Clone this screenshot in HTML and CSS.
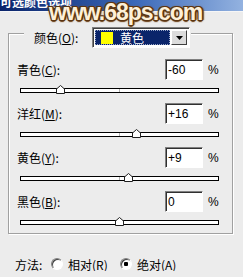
FILE: index.html
```html
<!DOCTYPE html>
<html lang="zh">
<head>
    <meta charset="UTF-8">
    <title>可选颜色选项</title>
    <link rel="stylesheet" href="styles.css">
</head>
<body>
    <div id="titlebar"><span>可选颜色选项</span></div>
    <div id="watermark">www.68ps.com</div>

    <div id="dialog">
        <div class="group">
            <div class="legend">
                <span class="lbl">颜色(<u>O</u>):</span>
                <div class="select">
                    <div class="picked"><i class="swatch"></i>黄色</div>
                    <div class="drop">
                        <svg width="7" height="4" viewBox="0 0 7 4"><polygon points="0,0 7,0 3.5,4" fill="#000"/></svg>
                    </div>
                </div>
            </div>

            <div class="field">
                <div class="head">
                    <span class="name">青色(<u>C</u>):</span>
                    <div class="box">-60</div>
                    <span class="pct">%</span>
                </div>
                <div class="track"><i class="mid"></i><svg class="thumb" style="left: 40px" width="9" height="9"><polygon points="0.5,8.5 0.5,4 4.5,0.5 8.5,4 8.5,8.5" fill="#fff" stroke="#202020"/></svg></div>
            </div>

            <div class="field">
                <div class="head">
                    <span class="name">洋红(<u>M</u>):</span>
                    <div class="box">+16</div>
                    <span class="pct">%</span>
                </div>
                <div class="track"><i class="mid"></i><svg class="thumb" style="left: 116px" width="9" height="9"><polygon points="0.5,8.5 0.5,4 4.5,0.5 8.5,4 8.5,8.5" fill="#fff" stroke="#202020"/></svg></div>
            </div>

            <div class="field">
                <div class="head">
                    <span class="name">黄色(<u>Y</u>):</span>
                    <div class="box">+9</div>
                    <span class="pct">%</span>
                </div>
                <div class="track"><i class="mid"></i><svg class="thumb" style="left: 108px" width="9" height="9"><polygon points="0.5,8.5 0.5,4 4.5,0.5 8.5,4 8.5,8.5" fill="#fff" stroke="#202020"/></svg></div>
            </div>

            <div class="field">
                <div class="head">
                    <span class="name">黑色(<u>B</u>):</span>
                    <div class="box">0</div>
                    <span class="pct">%</span>
                </div>
                <div class="track"><i class="mid"></i><svg class="thumb" style="left: 99px" width="9" height="9"><polygon points="0.5,8.5 0.5,4 4.5,0.5 8.5,4 8.5,8.5" fill="#fff" stroke="#202020"/></svg></div>
            </div>
        </div>

        <div class="method">
            <span class="mlbl">方法:</span>
            <span class="radio"></span>
            <span class="opt">相对(<u>R</u>)</span>
            <span class="radio on"></span>
            <span class="opt">绝对(<u>A</u>)</span>
        </div>
    </div>
</body>
</html>
```

FILE: styles.css
```css
body {
    margin: 0;
    background: #ececec;
    font-family: "Noto Sans CJK SC", "Liberation Sans", sans-serif;
    font-size: 12px;
    color: #000;
    overflow: hidden;
}

#titlebar {
    height: 11px;
    overflow: hidden;
    background: linear-gradient(to right, #0a246a, #3a68b8 55%, #93b2e0);
    border-bottom: 1px solid #f6f6f6;
}

#titlebar span {
    display: block;
    margin-top: -6px;
    color: #fff;
    font-weight: bold;
    font-size: 12px;
    line-height: 16px;
}

#watermark {
    position: absolute;
    left: 49px;
    top: 0;
    font-family: "Liberation Sans", sans-serif;
    font-weight: bold;
    font-size: 23px;
    line-height: 24px;
    letter-spacing: -1px;
    color: #fdf0d8;
    text-shadow: 1px 1px 0 #5a3412, -1px -1px 0 #5a3412, 1px -1px 0 #5a3412, -1px 1px 0 #5a3412,
                 0 2px 1px #6b4018, 2px 0 1px #6b4018, 0 0 3px #8a5a28;
}

#dialog {
    padding: 21px 0 0 8px;
}

.group {
    box-sizing: border-box;
    width: 225px;
    height: 201px;
    border: 1px solid #a0a0a0;
    box-shadow: inset 1px 1px 0 #fff, 1px 1px 0 #fff;
    padding-left: 8px;
}

.legend {
    display: flex;
    align-items: center;
    width: fit-content;
    margin: -7px 0 0 7px;
    padding: 0 1px 0 10px;
    background: #ececec;
    height: 21px;
}

.lbl {
    width: 58px;
}

.select {
    display: flex;
    box-sizing: border-box;
    width: 98px;
    height: 21px;
    padding: 2px;
    border: 1px solid;
    border-color: #808080 #fff #fff #808080;
    background: #fff;
    box-shadow: inset 1px 1px 0 #404040;
}

.picked {
    flex: 1;
    display: flex;
    align-items: center;
    background: #0a246a;
    color: #fff;
    outline: 1px dotted #9aa8c8;
    outline-offset: -1px;
}

.swatch {
    width: 12px;
    height: 12px;
    margin: 0 7px 0 6px;
    background: #ffff00;
}

.drop {
    display: flex;
    align-items: center;
    justify-content: center;
    width: 14px;
    background: #dcdcdc;
    border: 1px solid;
    border-color: #fff #404040 #404040 #fff;
    margin-left: 1px;
}

.field {
    height: 44px;
}

.legend + .field {
    margin-top: 11px;
}

.head {
    display: flex;
    align-items: center;
    height: 21px;
}

.name {
    width: 148px;
}

.box {
    box-sizing: border-box;
    width: 38px;
    height: 21px;
    padding: 3px 0 0 2px;
    font-family: "Liberation Sans", sans-serif;
    font-size: 12px;
    line-height: 14px;
    background: #fff;
    border: 1px solid;
    border-color: #808080 #fff #fff #808080;
    box-shadow: inset 1px 1px 0 #303030;
}

.pct {
    margin-left: 5px;
    font-family: "Liberation Sans", sans-serif;
}

.track {
    position: relative;
    box-sizing: border-box;
    width: 199px;
    height: 5px;
    margin: 8px 0 0 3px;
    background: #fff;
    border: 1px solid #000;
}

.mid {
    position: absolute;
    left: 98px;
    top: 0;
    width: 1px;
    height: 3px;
    background: #b0b0b0;
}

.thumb {
    position: absolute;
    top: -4px;
    margin-left: -5px;
}

.method {
    display: flex;
    align-items: center;
    height: 14px;
    margin: 23px 0 0 7px;
}

.mlbl {
    width: 36px;
}

.radio {
    box-sizing: border-box;
    width: 12px;
    height: 12px;
    border-radius: 50%;
    border: 1px solid;
    border-color: #808080 #fff #fff #808080;
    background: #fff;
    box-shadow: inset 1px 1px 0 #404040;
    margin-right: 5px;
}

.radio.on {
    background: radial-gradient(circle, #000 0 2px, #fff 2.5px);
}

.opt {
    width: 52px;
}
```
